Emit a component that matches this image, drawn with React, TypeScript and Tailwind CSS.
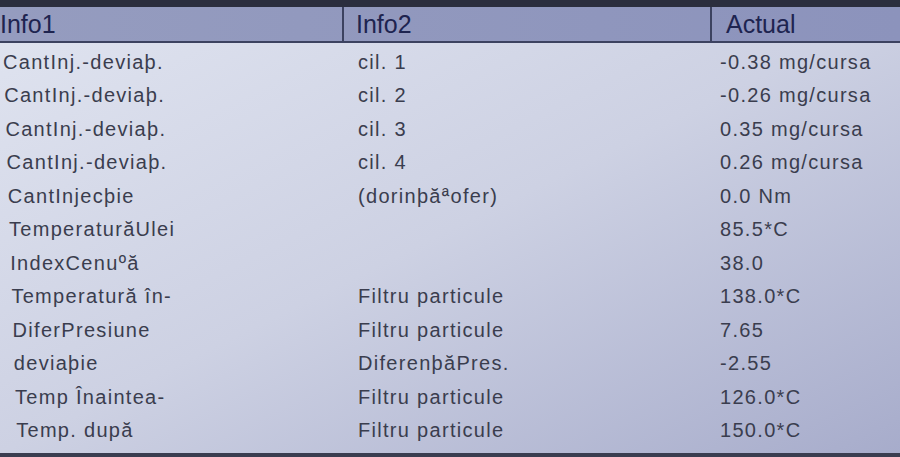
import React from "react";

const rows: [string, string, string][] = [
  ["CantInj.-deviaþ.", "cil. 1", "-0.38 mg/cursa"],
  ["CantInj.-deviaþ.", "cil. 2", "-0.26 mg/cursa"],
  ["CantInj.-deviaþ.", "cil. 3", "0.35 mg/cursa"],
  ["CantInj.-deviaþ.", "cil. 4", "0.26 mg/cursa"],
  ["CantInjecþie", "(dorinþă\u00aaofer)", "0.0 Nm"],
  ["TemperaturăUlei", "", "85.5*C"],
  ["IndexCenu\u00baă", "", "38.0"],
  ["Temperatură în-", "Filtru particule", "138.0*C"],
  ["DiferPresiune", "Filtru particule", "7.65"],
  ["deviaþie", "DiferenþăPres.", "-2.55"],
  ["Temp Înaintea-", "Filtru particule", "126.0*C"],
  ["Temp. după", "Filtru particule", "150.0*C"],
];

export default function App() {
  return (
    <div
      className="w-[900px] h-[457px] overflow-hidden flex flex-col bg-[#2a2c38]"
      style={{ fontFamily: '"Liberation Sans", Arial, sans-serif' }}
    >
      <div className="h-[7px] bg-[#2b2e3e]" />
      <div className="flex-1 flex flex-col bg-gradient-to-br from-[#e0e4f0] via-[#cdd1e3] to-[#a7accb]">
        <div className="h-[36px] grid grid-cols-[344px_368px_1fr] bg-gradient-to-r from-[#959cbf] to-[#8c93bc] border-b-2 border-[#3c4260]">
          <div className="border-r-2 border-[#3c4260] text-[25px] leading-[34px] text-[#1e2450] pl-0 font-light">Info1</div>
          <div className="border-r-2 border-[#3c4260] text-[25px] leading-[34px] text-[#1e2450] pl-[12px] font-light">Info2</div>
          <div className="text-[25px] leading-[34px] text-[#1e2450] pl-[14px] font-light">Actual</div>
        </div>
        <div className="flex-1 flex">
          <div className="flex-1 flex flex-col pt-[2px]">
            {rows.map((r, i) => (
              <div
                key={i}
                className="h-[33.5px] grid grid-cols-[344px_368px_1fr] items-center text-[20px] tracking-[1.3px] text-[#3a3d4e]"
              >
                <div style={{ paddingLeft: 3 + i * 1.2 }}>{r[0]}</div>
                <div className="pl-[14px]">{r[1]}</div>
                <div className="pl-[8px]">{r[2]}</div>
              </div>
            ))}
          </div>
        </div>
      </div>
      <div className="h-[4px] bg-[#3a3d50]" />
    </div>
  );
}
